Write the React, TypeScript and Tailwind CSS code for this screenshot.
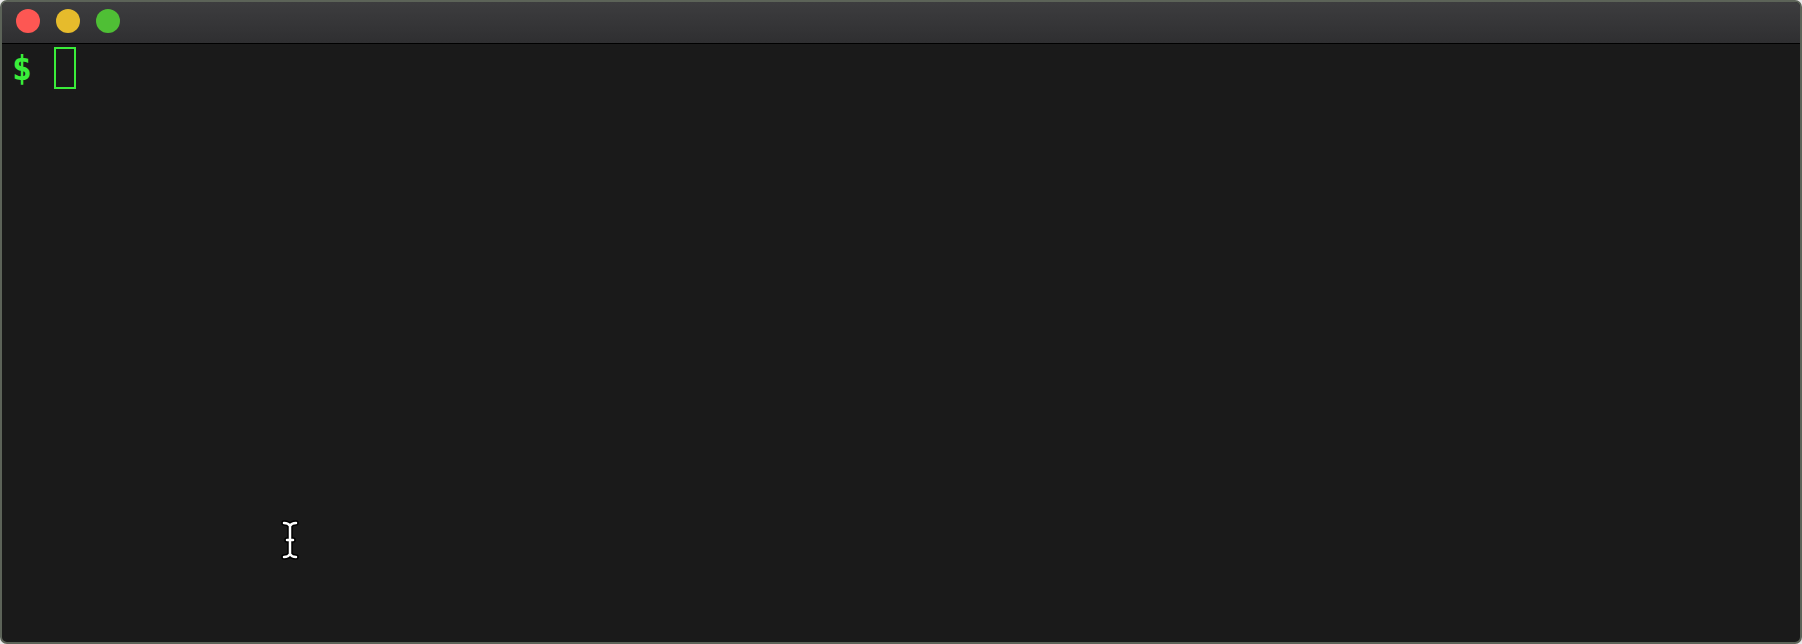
import React from 'react';

const IBeam = () => (
  <svg width="18" height="40" viewBox="0 0 18 40" className="absolute left-[281px] top-[520px]">
    <path
      d="M3 3 C6 3 8 4 9 6 C10 4 12 3 15 3 M9 6 L9 34 M3 37 C6 37 8 36 9 34 C10 36 12 37 15 37 M6 20 L12 20"
      fill="none"
      stroke="#000"
      strokeWidth="5.5"
      strokeLinecap="round"
    />
    <path
      d="M3 3 C6 3 8 4 9 6 C10 4 12 3 15 3 M9 6 L9 34 M3 37 C6 37 8 36 9 34 C10 36 12 37 15 37 M6 20 L12 20"
      fill="none"
      stroke="#fff"
      strokeWidth="2.5"
      strokeLinecap="round"
    />
  </svg>
);

const App = () => {
  return (
    <div className="w-[1802px] h-[644px] bg-[#e8e8e8] relative">
      <div className="h-full flex flex-col border-2 border-[#5c6358] rounded-[7px] overflow-hidden bg-[#1a1a1a]">
        {/* title bar */}
        <div className="h-[42px] shrink-0 flex items-start gap-4 pl-[14px] pt-[7px] bg-gradient-to-b from-[#3d3d3f] to-[#2f2f31] border-b border-black">
          <span className="w-6 h-6 rounded-full bg-[#fd5753]" />
          <span className="w-6 h-6 rounded-full bg-[#e6bb2c]" />
          <span className="w-6 h-6 rounded-full bg-[#4fbf35]" />
        </div>

        {/* terminal body */}
        <div className="flex-1 pl-[10px] pt-[2px]">
          <div className="flex items-center h-[44px]" style={{ fontFamily: '"DejaVu Sans Mono", monospace' }}>
            <span className="text-[33px] font-bold leading-none text-[#3aed3a]">$</span>
            <span className="ml-[22px] w-[22px] h-[42px] border-2 border-[#3aed3a]" />
          </div>
        </div>
      </div>
      <IBeam />
    </div>
  );
};

export default App;
